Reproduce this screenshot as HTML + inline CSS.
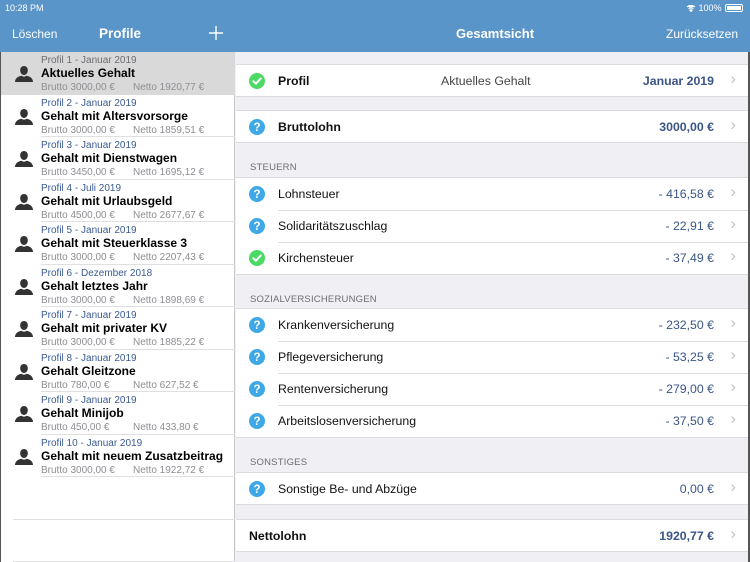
<!DOCTYPE html>
<html><head><meta charset="utf-8"><style>
*{margin:0;padding:0;box-sizing:border-box}
body{width:750px;height:562px;overflow:hidden;font-family:"Liberation Sans",sans-serif;background:#efeff4;position:relative}
.hdr{position:absolute;left:0;top:0;width:750px;height:52px;background:#5a95c9;color:#fff}
.abs{position:absolute;white-space:nowrap}
.left{position:absolute;left:0;top:52px;width:235px;height:510px;background:#fff;border-right:1px solid #c8c7cc;border-left:1px solid #555}
.lrow{position:absolute;left:0;width:234px;height:42.5px}
.lrow .sep{position:absolute;left:40px;right:0;bottom:0;height:1px;background:#e0e0e0}
.lrow .p{position:absolute;left:40px;top:3px;font-size:10px;color:#3a5a92}
.lrow .t{position:absolute;left:40px;top:14px;font-size:12px;font-weight:bold;color:#000}
.lrow .b{position:absolute;left:40px;top:30px;font-size:10px;color:#8e8e93}
.lrow .n{position:absolute;left:132px;top:30px;font-size:10px;color:#8e8e93}
.lrow svg{position:absolute;left:14px;top:14px}
.rrow{position:absolute;left:236px;width:512px;height:33px;background:#fff;border-top:1px solid #dcdce0;border-bottom:1px solid #dcdce0}
.rrow.mid{border-bottom:none}
.rrow .ic{position:absolute;left:13px;top:8px}
.rrow .l{position:absolute;left:42px;top:9px;font-size:12.3px;color:#111}
.rrow .v{position:absolute;right:34px;top:9px;font-size:12.3px;color:#3b5587}
.rrow .c{position:absolute;right:12px;top:4px;font-size:17px;color:#c4c4c8}
.rrow.inner{border-top:none}
.inner::before{content:"";position:absolute;left:42px;right:0;top:0;height:1px;background:#dcdce0}
.sh{position:absolute;left:250px;font-size:9.5px;color:#6d6d72;letter-spacing:.2px}
</style></head><body>
<div class="hdr">
<div class="abs" style="left:5px;top:3px;font-size:9px">10:28 PM</div>
<div class="abs" style="left:12px;top:27px;font-size:12px">Löschen</div>
<div class="abs" style="left:99px;top:26px;font-size:13.5px;font-weight:bold">Profile</div>
<svg class="abs" style="left:209px;top:26px" width="14" height="14" viewBox="0 0 14 14"><path d="M7 0V14M0 7H14" stroke="#fff" stroke-width="1.4"/></svg>
<div class="abs" style="left:456px;top:26px;font-size:13px;font-weight:bold">Gesamtsicht</div>
<div class="abs" style="left:666px;top:27px;font-size:12px">Zurücksetzen</div>
<div class="abs" style="left:686px;top:3px;font-size:9px">
<svg width="10" height="8" viewBox="0 0 10 8" style="vertical-align:-1px"><path d="M1 3a6 6 0 0 1 8 0M2.5 4.6a4 4 0 0 1 5 0M5 7.5 3.8 6.2a2 2 0 0 1 2.4 0z" stroke="#fff" stroke-width="1.1" fill="#fff"/></svg> 100%</div>
<div class="abs" style="left:725px;top:4px;width:18px;height:8px;border:1px solid #fff;border-radius:2px;padding:1px"><div style="background:#fff;width:100%;height:100%"></div></div>
</div>
<div class="left">
<div class="lrow" style="top:0;background:#d9d9d9"><svg width="18" height="16" viewBox="0 0 18 16"><path d="M9 0c2.4 0 3.8 1.9 3.8 4.3S11.4 9 9 9 5.2 6.7 5.2 4.3 6.6 0 9 0zM0 16c0-3.5 3-5.8 6.5-6.3.8.6 1.6.9 2.5.9s1.7-.3 2.5-.9C15 10.2 18 12.5 18 16z" fill="#333"/></svg><div class="p" style="color:#6d6d72">Profil 1 - Januar 2019</div><div class="t">Aktuelles Gehalt</div><div class="b">Brutto 3000,00 €</div><div class="n">Netto 1920,77 €</div></div>
<div class="lrow" style="top:42.5px"><svg width="18" height="16" viewBox="0 0 18 16"><path d="M9 0c2.4 0 3.8 1.9 3.8 4.3S11.4 9 9 9 5.2 6.7 5.2 4.3 6.6 0 9 0zM0 16c0-3.5 3-5.8 6.5-6.3.8.6 1.6.9 2.5.9s1.7-.3 2.5-.9C15 10.2 18 12.5 18 16z" fill="#333"/></svg><div class="p">Profil 2 - Januar 2019</div><div class="t">Gehalt mit Altersvorsorge</div><div class="b">Brutto 3000,00 €</div><div class="n">Netto 1859,51 €</div><div class="sep"></div></div>
<div class="lrow" style="top:85px"><svg width="18" height="16" viewBox="0 0 18 16"><path d="M9 0c2.4 0 3.8 1.9 3.8 4.3S11.4 9 9 9 5.2 6.7 5.2 4.3 6.6 0 9 0zM0 16c0-3.5 3-5.8 6.5-6.3.8.6 1.6.9 2.5.9s1.7-.3 2.5-.9C15 10.2 18 12.5 18 16z" fill="#333"/></svg><div class="p">Profil 3 - Januar 2019</div><div class="t">Gehalt mit Dienstwagen</div><div class="b">Brutto 3450,00 €</div><div class="n">Netto 1695,12 €</div><div class="sep"></div></div>
<div class="lrow" style="top:127.5px"><svg width="18" height="16" viewBox="0 0 18 16"><path d="M9 0c2.4 0 3.8 1.9 3.8 4.3S11.4 9 9 9 5.2 6.7 5.2 4.3 6.6 0 9 0zM0 16c0-3.5 3-5.8 6.5-6.3.8.6 1.6.9 2.5.9s1.7-.3 2.5-.9C15 10.2 18 12.5 18 16z" fill="#333"/></svg><div class="p">Profil 4 - Juli 2019</div><div class="t">Gehalt mit Urlaubsgeld</div><div class="b">Brutto 4500,00 €</div><div class="n">Netto 2677,67 €</div><div class="sep"></div></div>
<div class="lrow" style="top:170px"><svg width="18" height="16" viewBox="0 0 18 16"><path d="M9 0c2.4 0 3.8 1.9 3.8 4.3S11.4 9 9 9 5.2 6.7 5.2 4.3 6.6 0 9 0zM0 16c0-3.5 3-5.8 6.5-6.3.8.6 1.6.9 2.5.9s1.7-.3 2.5-.9C15 10.2 18 12.5 18 16z" fill="#333"/></svg><div class="p">Profil 5 - Januar 2019</div><div class="t">Gehalt mit Steuerklasse 3</div><div class="b">Brutto 3000,00 €</div><div class="n">Netto 2207,43 €</div><div class="sep"></div></div>
<div class="lrow" style="top:212.5px"><svg width="18" height="16" viewBox="0 0 18 16"><path d="M9 0c2.4 0 3.8 1.9 3.8 4.3S11.4 9 9 9 5.2 6.7 5.2 4.3 6.6 0 9 0zM0 16c0-3.5 3-5.8 6.5-6.3.8.6 1.6.9 2.5.9s1.7-.3 2.5-.9C15 10.2 18 12.5 18 16z" fill="#333"/></svg><div class="p">Profil 6 - Dezember 2018</div><div class="t">Gehalt letztes Jahr</div><div class="b">Brutto 3000,00 €</div><div class="n">Netto 1898,69 €</div><div class="sep"></div></div>
<div class="lrow" style="top:255px"><svg width="18" height="16" viewBox="0 0 18 16"><path d="M9 0c2.4 0 3.8 1.9 3.8 4.3S11.4 9 9 9 5.2 6.7 5.2 4.3 6.6 0 9 0zM0 16c0-3.5 3-5.8 6.5-6.3.8.6 1.6.9 2.5.9s1.7-.3 2.5-.9C15 10.2 18 12.5 18 16z" fill="#333"/></svg><div class="p">Profil 7 - Januar 2019</div><div class="t">Gehalt mit privater KV</div><div class="b">Brutto 3000,00 €</div><div class="n">Netto 1885,22 €</div><div class="sep"></div></div>
<div class="lrow" style="top:297.5px"><svg width="18" height="16" viewBox="0 0 18 16"><path d="M9 0c2.4 0 3.8 1.9 3.8 4.3S11.4 9 9 9 5.2 6.7 5.2 4.3 6.6 0 9 0zM0 16c0-3.5 3-5.8 6.5-6.3.8.6 1.6.9 2.5.9s1.7-.3 2.5-.9C15 10.2 18 12.5 18 16z" fill="#333"/></svg><div class="p">Profil 8 - Januar 2019</div><div class="t">Gehalt Gleitzone</div><div class="b">Brutto 780,00 €</div><div class="n">Netto 627,52 €</div><div class="sep"></div></div>
<div class="lrow" style="top:340px"><svg width="18" height="16" viewBox="0 0 18 16"><path d="M9 0c2.4 0 3.8 1.9 3.8 4.3S11.4 9 9 9 5.2 6.7 5.2 4.3 6.6 0 9 0zM0 16c0-3.5 3-5.8 6.5-6.3.8.6 1.6.9 2.5.9s1.7-.3 2.5-.9C15 10.2 18 12.5 18 16z" fill="#333"/></svg><div class="p">Profil 9 - Januar 2019</div><div class="t">Gehalt Minijob</div><div class="b">Brutto 450,00 €</div><div class="n">Netto 433,80 €</div><div class="sep"></div></div>
<div class="lrow" style="top:382.5px"><svg width="18" height="16" viewBox="0 0 18 16"><path d="M9 0c2.4 0 3.8 1.9 3.8 4.3S11.4 9 9 9 5.2 6.7 5.2 4.3 6.6 0 9 0zM0 16c0-3.5 3-5.8 6.5-6.3.8.6 1.6.9 2.5.9s1.7-.3 2.5-.9C15 10.2 18 12.5 18 16z" fill="#333"/></svg><div class="p">Profil 10 - Januar 2019</div><div class="t">Gehalt mit neuem Zusatzbeitrag</div><div class="b">Brutto 3000,00 €</div><div class="n">Netto 1922,72 €</div><div class="sep"></div></div>
<div class="lrow" style="top:425px"><div class="sep" style="left:12px"></div></div>
<div class="lrow" style="top:467.5px"><div class="sep" style="left:12px"></div></div>
</div>

<svg width="0" height="0" style="position:absolute"><defs>
<symbol id="ok" viewBox="0 0 16 16"><circle cx="8" cy="8" r="8" fill="#4cd964"/><path d="M4.3 8.2 6.9 10.7 11.7 5.5" stroke="#fff" stroke-width="2" fill="none" stroke-linecap="round" stroke-linejoin="round"/></symbol>
<symbol id="q" viewBox="0 0 16 16"><circle cx="8" cy="8" r="8" fill="#3fa9e8"/><text x="8" y="12.2" text-anchor="middle" font-family="Liberation Sans" font-weight="bold" font-size="11.5" fill="#fff">?</text></symbol>
</defs></svg>

<div class="rrow" style="top:64px"><svg class="ic" width="16" height="16"><use href="#ok"/></svg><div class="l" style="font-weight:bold">Profil</div><div class="abs" style="left:205px;top:9px;font-size:12.3px;color:#444">Aktuelles Gehalt</div><div class="v" style="font-weight:bold">Januar 2019</div><div class="c">›</div></div>
<div class="rrow" style="top:110px"><svg class="ic" width="16" height="16"><use href="#q"/></svg><div class="l" style="font-weight:bold">Bruttolohn</div><div class="v" style="font-weight:bold">3000,00 €</div><div class="c">›</div></div>
<div class="sh" style="top:162px">STEUERN</div>
<div class="rrow mid" style="top:177px"><svg class="ic" width="16" height="16"><use href="#q"/></svg><div class="l">Lohnsteuer</div><div class="v">- 416,58 €</div><div class="c">›</div></div>
<div class="rrow mid inner" style="top:210px"><svg class="ic" width="16" height="16"><use href="#q"/></svg><div class="l">Solidaritätszuschlag</div><div class="v">- 22,91 €</div><div class="c">›</div></div>
<div class="rrow inner" style="top:242px"><svg class="ic" width="16" height="16"><use href="#ok"/></svg><div class="l">Kirchensteuer</div><div class="v">- 37,49 €</div><div class="c">›</div></div>
<div class="sh" style="top:294px">SOZIALVERSICHERUNGEN</div>
<div class="rrow mid" style="top:308px"><svg class="ic" width="16" height="16"><use href="#q"/></svg><div class="l">Krankenversicherung</div><div class="v">- 232,50 €</div><div class="c">›</div></div>
<div class="rrow mid inner" style="top:341px"><svg class="ic" width="16" height="16"><use href="#q"/></svg><div class="l">Pflegeversicherung</div><div class="v">- 53,25 €</div><div class="c">›</div></div>
<div class="rrow mid inner" style="top:373px"><svg class="ic" width="16" height="16"><use href="#q"/></svg><div class="l">Rentenversicherung</div><div class="v">- 279,00 €</div><div class="c">›</div></div>
<div class="rrow inner" style="top:405px"><svg class="ic" width="16" height="16"><use href="#q"/></svg><div class="l">Arbeitslosenversicherung</div><div class="v">- 37,50 €</div><div class="c">›</div></div>
<div class="sh" style="top:457px">SONSTIGES</div>
<div class="rrow" style="top:472px"><svg class="ic" width="16" height="16"><use href="#q"/></svg><div class="l">Sonstige Be- und Abzüge</div><div class="v">0,00 €</div><div class="c">›</div></div>
<div class="rrow" style="top:519px"><div class="l" style="left:13px;font-weight:bold">Nettolohn</div><div class="v" style="font-weight:bold">1920,77 €</div><div class="c">›</div></div>
<div style="position:absolute;right:0;top:52px;width:2px;height:510px;background:#555"></div>
</body></html>
